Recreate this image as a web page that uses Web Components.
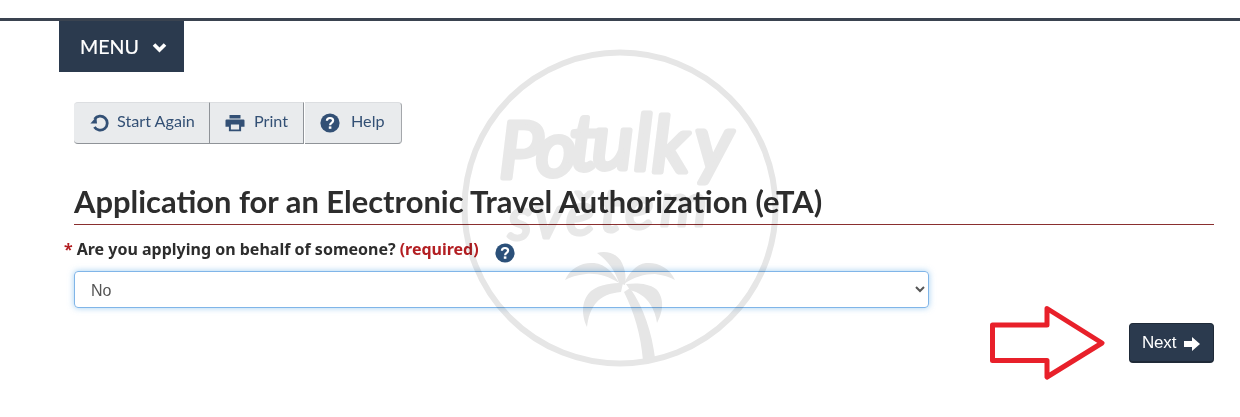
<!DOCTYPE html>
<html lang="en">
<head>
<meta charset="utf-8">
<title>eTA</title>
<style>
  html, body { margin: 0; padding: 0; background: #fff; }
  body { font-family: Lato, "Liberation Sans", sans-serif; overflow: hidden; }
</style>
</head>
<body>
<eta-page>
  <nav-menu slot="nav">MENU</nav-menu>
  <tool-bar slot="tools">
    <tool-button icon="reset" pos="first" gap="7">Start Again</tool-button>
    <tool-button icon="print" pos="mid" gap="9">Print</tool-button>
    <tool-button icon="help" pos="last" gap="11">Help</tool-button>
  </tool-bar>
  <eta-heading slot="heading">Application for an Electronic Travel Authorization (eTA)</eta-heading>
  <eta-field slot="field">Are you applying on behalf of someone?</eta-field>
  <next-button slot="next">Next</next-button>
</eta-page>

<script>
const ICONS = {
  reset: `<svg width="20" height="20" viewBox="0 0 20 20" aria-hidden="true"><path d="M4.6 6A7 7 0 1 1 4.4 14" fill="none" stroke="currentColor" stroke-width="2.8" stroke-linecap="butt"/><path d="M0.4 10.6 L7 10.6 L6.4 3.8 Z" fill="currentColor"/></svg>`,
  print: `<svg width="20" height="18" viewBox="0 0 20 18" aria-hidden="true"><path fill="currentColor" fill-rule="evenodd" d="M4.5 1h11v3.6h-11zM0.5 6.5Q0.5 5.4 1.6 5.4h16.8q1.1 0 1.1 1.1v6.2h-3.4v4.6H3.9v-4.6H0.5zM5.9 10.4v5.2h8.2v-5.2z"/></svg>`,
  help: `<svg width="20" height="20" viewBox="0 0 20 20" aria-hidden="true"><circle cx="10" cy="10" r="9.6" fill="currentColor"/><path d="M6.9 7.7C7 5.9 8.3 5 10 5c1.8 0 3.1 1 3.1 2.6 0 2.4-3 2.2-3 4.6" fill="none" stroke="#fff" stroke-width="2.2"/><rect x="8.8" y="13.4" width="2.6" height="2.4" fill="#fff"/></svg>`
};

function shadow(el, html) {
  el.attachShadow({ mode: "open" }).innerHTML = html;
}

customElements.define("eta-page", class extends HTMLElement {
  constructor() {
    super();
    shadow(this, `
      <style>
        :host { display: block; position: relative; width: 1240px; height: 417px; overflow: hidden; box-sizing: border-box; padding-top: 18px; color: #2d2d2d; }
        .bar { height: 3px; background: #3a4350; }
        .nav { display: flex; padding-left: 59px; }
        .tools { display: flex; padding: 30px 0 0 74px; }
        .content { padding: 0 26px 0 74px; }
        .actions { display: flex; justify-content: flex-end; padding: 15px 26px 0 0; }
        svg.mark { position: absolute; left: 0; top: 0; mix-blend-mode: multiply; pointer-events: none; }
        svg.arrow { position: absolute; left: 0; top: 0; pointer-events: none; }
        .mark text { font-family: Lato, sans-serif; font-style: italic; font-weight: 400; fill: #e8e8e8; stroke: #e8e8e8; stroke-linejoin: round; stroke-linecap: round; }
      </style>
      <div class="bar"></div>
      <div class="nav"><slot name="nav"></slot></div>
      <div class="tools"><slot name="tools"></slot></div>
      <div class="content"><slot name="heading"></slot><slot name="field"></slot></div>
      <div class="actions"><slot name="next"></slot></div>
      <svg class="mark" width="1240" height="417" viewBox="0 0 1240 417">
        <circle cx="620" cy="208" r="155.5" fill="none" stroke="#e6e6e6" stroke-width="6"/>
        <text font-size="78" stroke-width="5" x="499 536 570 592 634 652 695" y="178 176 170 169 170 172 170">Potulky</text>
        <text font-size="60" stroke-width="3" x="508 534 566 600 625 660" y="240 238 235 232 229 226">světem</text>
        <g fill="#e6e6e6">
          <path d="M624 292C634 312 641 335 643 361L655 358C652 333 644 308 630 288Z"/>
          <path d="M619 283C615 270 607 260 597 253C607 250 618 254 622 263C626 271 626 279 625 285Z"/>
          <path d="M565 280C570 268 582 262 594 263C606 264 614 274 619 283C608 276 597 273 586 274C577 275 570 277 565 280Z"/>
          <path d="M675 280C670 268 658 262 646 263C636 264 628 274 624 284C634 277 644 274 655 274C663 275 670 277 675 280Z"/>
          <path d="M587 327C580 312 583 298 591 291C600 284 612 283 623 283L621 292C610 293 602 296 596 303C591 309 588 317 587 327Z"/>
          <path d="M657 323C665 308 663 296 656 289C648 283 636 283 626 284L630 290C638 292 646 297 650 304C654 310 656 316 657 323Z"/>
        </g>
      </svg>
      <svg class="arrow" width="1240" height="417" viewBox="0 0 1240 417" aria-hidden="true">
        <path d="M992.5 325H1047V308.5L1102 343L1047 377V360.5H992.5Z" fill="none" stroke="#e8202a" stroke-width="5" stroke-linejoin="round"/>
      </svg>
    `);
  }
});

customElements.define("nav-menu", class extends HTMLElement {
  constructor() {
    super();
    shadow(this, `
      <style>
        :host { display: flex; align-items: center; box-sizing: border-box; width: 125px; height: 51px; padding-left: 21px; gap: 13px; background: #2b3a4e; color: #fff; font: 400 19.6px Lato, sans-serif; -webkit-text-stroke: 0.2px #fff; }
        svg { display: block; margin-top: 1px; }
      </style>
      <slot></slot>
      <svg width="15" height="11" viewBox="0 0 15 11" aria-hidden="true"><path d="M2 2.5L7.5 8L13 2.5" fill="none" stroke="#fff" stroke-width="3.6"/></svg>
    `);
  }
});

customElements.define("tool-bar", class extends HTMLElement {
  constructor() {
    super();
    shadow(this, `<style>:host { display: flex; height: 42px; }</style><slot></slot>`);
  }
});

customElements.define("tool-button", class extends HTMLElement {
  constructor() {
    super();
    const icon = ICONS[this.getAttribute("icon")] || "";
    const pos = this.getAttribute("pos");
    const gap = this.getAttribute("gap") || 8;
    const rules = {
      first: "width:136px; padding-left:16px; border-radius:4px 0 0 4px; border-right:1px solid #8f9398;",
      mid: "width:94px; padding-left:15px; border-right:1px solid #8f9398;",
      last: "width:97px; padding-left:15px; margin-left:1px; border-radius:0 4px 4px 0; border-right:1px solid #a4a7ab;"
    }[pos];
    shadow(this, `
      <style>
        :host { display: flex; align-items: center; box-sizing: border-box; height: 42px; gap: ${gap}px; background: #e9ebed; color: #335075; border-top: 1px solid #dcdee1; border-bottom: 1px solid #8f9398; font: 400 16.2px Lato, sans-serif; ${rules} }
        svg { display: block; margin-top: -1px; }
        span { display: block; margin-top: -5px; }
      </style>
      ${icon}<span><slot></slot></span>
    `);
  }
});

customElements.define("eta-heading", class extends HTMLElement {
  constructor() {
    super();
    shadow(this, `
      <style>
        :host { display: block; margin-top: 38px; height: 42px; border-bottom: 1px solid #8a2f2f; color: #2d2d2d; font: 700 30.9px/40px Lato, sans-serif; white-space: nowrap; }
      </style>
      <slot></slot>
    `);
  }
});

customElements.define("eta-field", class extends HTMLElement {
  constructor() {
    super();
    shadow(this, `
      <style>
        :host { display: block; }
        .label { display: flex; align-items: center; height: 24px; margin: 12px 0 0 -10px; font: 700 16px "Noto Sans", sans-serif; color: #2d2d2d; white-space: nowrap; }
        .star, .req { color: #b31e22; }
        .star { margin-right: 4px; }
        .req { margin-left: 4px; }
        svg { margin: 8px 0 0 16px; display: block; color: #2b5079; }
        select { display: block; box-sizing: border-box; width: 855px; height: 37px; margin-top: 10px; padding: 2px 12px 0; border: 1px solid #80b5e8; border-radius: 4px; background-color: transparent; color: #555; font: 400 16px "Liberation Sans", sans-serif; outline: none; box-shadow: 0 0 6px rgba(102,175,233,.6); }
      </style>
      <div class="label"><span class="star">*</span><span><slot></slot></span><span class="req">(required)</span>${ICONS.help}</div>
      <select aria-label="Are you applying on behalf of someone?"><option>No</option><option>Yes</option></select>
    `);
  }
});

customElements.define("next-button", class extends HTMLElement {
  constructor() {
    super();
    shadow(this, `
      <style>
        :host { display: flex; align-items: center; gap: 8px; box-sizing: border-box; width: 85px; height: 40px; padding-left: 12px; background: #2b3a4e; color: #fff; border: 1px solid #1f2a38; border-bottom-width: 2px; border-radius: 4px; font: 400 17px/22px "Liberation Sans", sans-serif; letter-spacing: -0.2px; }
        span { display: block; margin-top: 1px; }
        svg { display: block; margin-top: 2px; }
      </style>
      <span><slot></slot></span>
      <svg width="16" height="14" viewBox="0 0 16 14" aria-hidden="true"><path d="M0 4H8V0L16 7L8 14V10H0Z" fill="#fff"/></svg>
    `);
  }
});
</script>
</body>
</html>
